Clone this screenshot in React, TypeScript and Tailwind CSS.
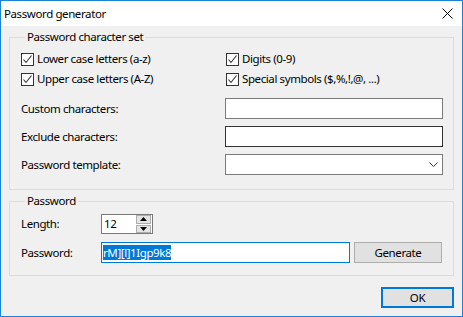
import React from "react";

const font = { fontFamily: '"Segoe UI", "Noto Sans", sans-serif' };

function Check({ label }: { label: string }) {
  return (
    <div className="flex items-center h-[20px]">
      <span className="w-[13px] h-[13px] border border-[#333333] bg-white flex items-center justify-center shrink-0">
        <svg width="11" height="11" viewBox="0 0 11 11">
          <path d="M1.5 5.5 L4 8.5 L9.5 1.5" fill="none" stroke="#333333" strokeWidth="1.1" />
        </svg>
      </span>
      <span className="ml-[3px] whitespace-nowrap">{label}</span>
    </div>
  );
}

function Row({ label, children }: { label: string; children: React.ReactNode }) {
  return (
    <div className="flex items-center h-[21px]">
      <span className="w-[204px]">{label}</span>
      {children}
    </div>
  );
}

export default function App() {
  return (
    <div
      className="w-[463px] h-[317px] border border-[#1883d7] flex flex-col bg-[#f0f0f0] text-black text-[11.5px] tracking-[-0.4px]"
      style={font}
    >
      <div className="h-[25px] bg-white flex items-center justify-between pl-[3px] pr-[9px] shrink-0">
        <span className="leading-none">Password generator</span>
        <svg width="11" height="11" viewBox="0 0 11 11">
          <path d="M0.5 0.5 L10.5 10.5 M10.5 0.5 L0.5 10.5" stroke="#000" strokeWidth="1" />
        </svg>
      </div>
      <div className="flex-1 flex flex-col px-[8px] pt-[3px] pb-[8px]">
        <fieldset className="border border-[#dcdcdc] pb-[14px] pr-[10px] pl-[11px] m-0">
          <legend className="ml-[4px] px-[2px] h-[16px] leading-[16px]">Password character set</legend>
          <div className="pt-[4px] grid grid-cols-[204px_1fr]">
            <Check label="Lower case letters (a-z)" />
            <div className="pl-[1px]">
              <Check label="Digits (0-9)" />
            </div>
            <Check label="Upper case letters (A-Z)" />
            <div className="pl-[1px]">
              <Check label="Special symbols ($,%,!,@, ...)" />
            </div>
          </div>
          <div className="mt-[9px] flex flex-col gap-[7px]">
            <Row label="Custom characters:">
              <div className="w-[218px] h-[21px] bg-white border border-[#7a7a7a]" />
            </Row>
            <Row label="Exclude characters:">
              <div className="w-[218px] h-[21px] bg-white border border-[#333333]" />
            </Row>
            <Row label="Password template:">
              <div className="w-[218px] h-[21px] bg-white border border-[#7a7a7a] flex items-center justify-end pr-[4px]">
                <svg width="9" height="5" viewBox="0 0 9 5">
                  <path d="M0.5 0.5 L4.5 4.5 L8.5 0.5" fill="none" stroke="#333" strokeWidth="1" />
                </svg>
              </div>
            </Row>
          </div>
        </fieldset>
        <fieldset className="mt-[3px] border border-[#dcdcdc] pb-[12px] pr-[11px] pl-[11px] m-0">
          <legend className="ml-[4px] px-[2px] h-[16px] leading-[16px]">Password</legend>
          <div className="pt-[5px] flex flex-col gap-[8px]">
            <div className="flex items-center h-[20px]">
              <span className="w-[80px]">Length:</span>
              <div className="w-[52px] h-[20px] bg-white border border-[#7a7a7a] flex items-center">
                <span className="flex-1 pl-[2px]">12</span>
                <div className="w-[16px] h-[18px] flex flex-col gap-[1px] pr-[1px]">
                  <div className="flex-1 bg-[#e5e5e5] border border-[#adadad] flex items-center justify-center">
                    <svg width="7" height="4" viewBox="0 0 7 4">
                      <path d="M0 4 L3.5 0 L7 4 Z" fill="#000" />
                    </svg>
                  </div>
                  <div className="flex-1 bg-[#e5e5e5] border border-[#adadad] flex items-center justify-center">
                    <svg width="7" height="4" viewBox="0 0 7 4">
                      <path d="M0 0 L7 0 L3.5 4 Z" fill="#000" />
                    </svg>
                  </div>
                </div>
              </div>
            </div>
            <div className="flex items-center h-[21px]">
              <span className="w-[80px]">Password:</span>
              <div className="w-[249px] h-[21px] bg-white border border-[#0078d7] flex items-center pl-[1px]">
                <span className="bg-[#0078d7] text-white leading-[15px]">rM][l]1Igp9k8</span>
              </div>
              <button className="ml-[4px] w-[88px] h-[21px] bg-[#e1e1e1] border border-[#adadad] flex items-center justify-center">
                Generate
              </button>
            </div>
          </div>
        </fieldset>
        <div className="mt-[11px] flex justify-end">
          <button className="w-[73px] h-[21px] bg-[#e1e1e1] border-2 border-[#0078d7] flex items-center justify-center">
            OK
          </button>
        </div>
      </div>
    </div>
  );
}
